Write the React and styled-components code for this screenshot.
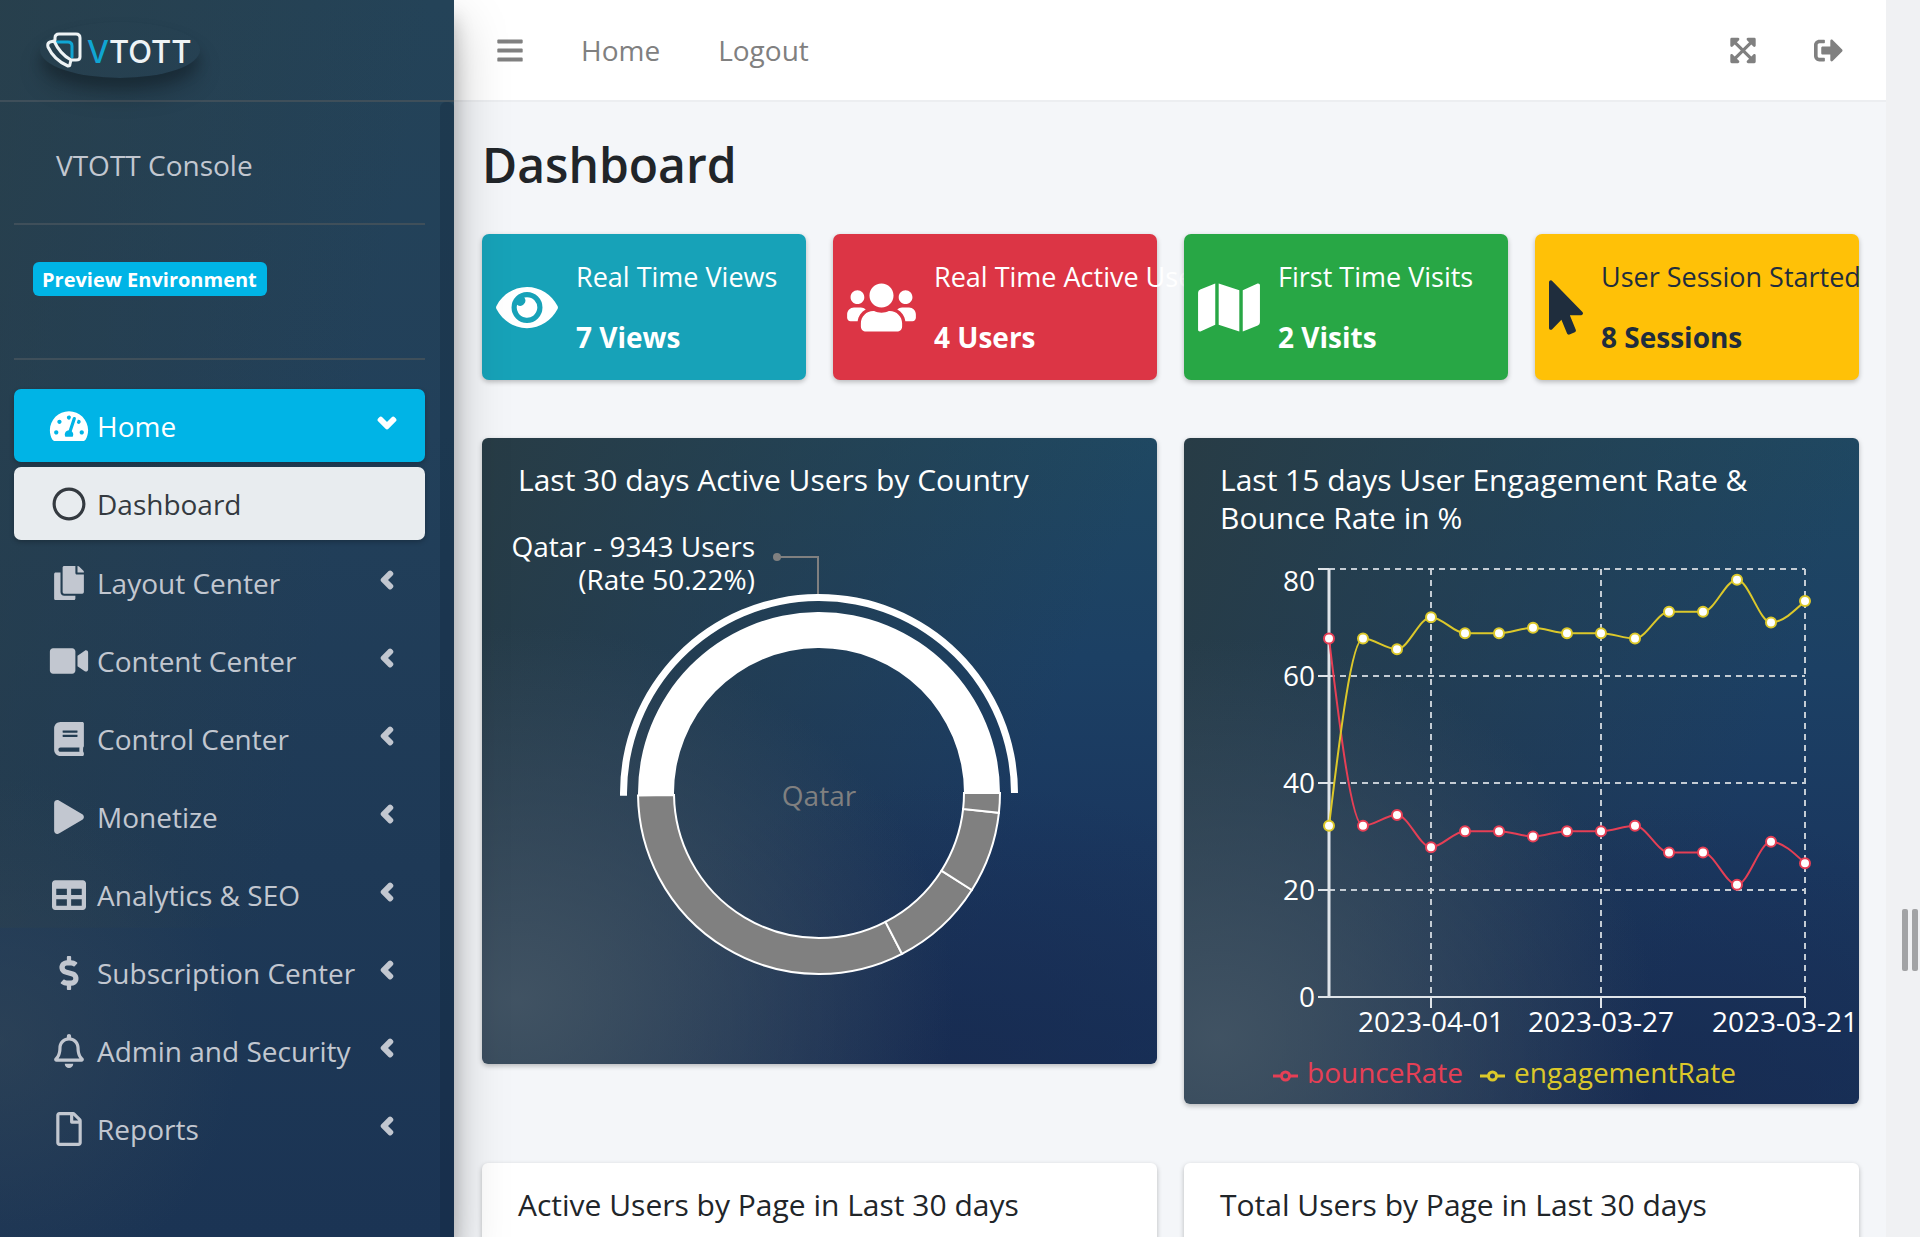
import React from "react";
import styled, { createGlobalStyle, css } from "styled-components";
import {
  FaAngleDown, FaAngleLeft, FaBars, FaBook, FaCopy, FaDollarSign, FaExpandArrowsAlt, FaEye, FaMap,
  FaMousePointer, FaPlay, FaRegBell, FaRegCircle, FaRegFile, FaSignOutAlt, FaTable, FaTachometerAlt,
  FaUsers, FaVideo,
} from "react-icons/fa";

const GlobalStyle = createGlobalStyle`
  *, *::before, *::after { box-sizing: border-box; }
  body {
    margin: 0;
    font-family: "Open Sans", "Noto Sans", sans-serif;
    font-size: 28px;
    line-height: 42px;
    color: #212529;
    background: #f4f6f9;
  }
  button { font: inherit; border: 0; background: none; padding: 0; cursor: pointer; }
  a { color: inherit; text-decoration: none; }
  ul { list-style: none; margin: 0; padding: 0; }
  h1, h2, p { margin: 0; }
  svg { flex: none; display: block; }
`;

const Shell = styled.div`
  display: flex;
  height: 100vh;
  overflow: hidden;
`;

/* ---------- sidebar ---------- */

const Sidebar = styled.aside`
  position: relative;
  z-index: 2;
  flex: none;
  width: 454px;
  display: flex;
  flex-direction: column;
  color: #c2c7d0;
  background:
    radial-gradient(ellipse 240px 260px at 0% 84%, rgba(56, 74, 88, 0.5), rgba(56, 74, 88, 0) 100%),
    linear-gradient(100deg, rgba(41, 62, 72, 0.7), rgba(41, 62, 72, 0) 70%) 0 0 / 100% 75% no-repeat,
    linear-gradient(180deg, #244358 0%, #22405a 35%, #1e3956 70%, #1b3454 100%);
  box-shadow: 0 25px 50px rgba(0, 0, 0, 0.25), 0 18px 18px rgba(0, 0, 0, 0.22);
`;

const Brand = styled.a`
  flex: none;
  height: 102px;
  padding: 22px 40px;
  border-bottom: 2px solid #3f4f5a;
`;

const BrandBadge = styled.span`
  display: flex;
  align-items: center;
  gap: 5px;
  width: 160px;
  height: 56px;
  padding-left: 6px;
  border-radius: 50%;
  box-shadow: 0 18px 24px rgba(0, 0, 0, 0.19), 0 10px 12px rgba(0, 0, 0, 0.18);
`;

const BrandName = styled.span`
  padding-top: 4px;
  font-family: Inter, sans-serif;
  font-size: 31px;
  font-weight: 500;
  line-height: 36px;
  color: #eef3f5;
  & > span { color: #10a5d3; }
`;

const SidebarBody = styled.div`
  flex: 1;
  display: flex;
  min-height: 0;
`;

const SidebarContent = styled.div`
  flex: 1;
  padding: 0 15px 0 14px;
`;

const ScrollTrack = styled.div`
  width: 14px;
  border-radius: 6px 6px 0 0;
  background: rgba(10, 30, 50, 0.25);
`;

const ConsoleTitle = styled.p`
  height: 123px;
  padding: 42px 42px 0;
  border-bottom: 2px solid #3f4f5a;
`;

const Environment = styled.div`
  height: 135px;
  padding: 37px 19px 0;
  border-bottom: 2px solid #3f4f5a;
`;

const EnvBadge = styled.span`
  display: inline-block;
  padding: 2px 10px 0 9px;
  border-radius: 6px;
  background: #00b4e6;
  color: #fff;
  font-size: 20px;
  font-weight: 700;
  line-height: 32px;
  vertical-align: top;
`;

const Nav = styled.nav`
  padding-top: 29px;
`;

const NavList = styled.ul`
  display: flex;
  flex-direction: column;
  gap: 5px;
`;

const navItem = css`
  display: flex;
  align-items: center;
  gap: 8px;
  width: 100%;
  height: 73px;
  padding: 0 28px 0 35px;
  border-radius: 7px;
  text-align: left;
  white-space: nowrap;
  color: #c2c7d0;
`;

const NavButton = styled.button`
  ${navItem}
  ${({ $open }) => $open && css`
    color: #fff;
    background: #00b4e6;
    box-shadow: 0 2px 5px rgba(0, 0, 0, 0.24);
  `}
`;

const SubLink = styled.a`
  ${navItem}
  color: #343a40;
  background: #e8ecef;
  box-shadow: 0 2px 5px rgba(0, 0, 0, 0.24);
`;

const SubList = styled.ul`
  padding: 5px 0 1px;
`;

const NavIcon = styled.span`
  display: flex;
  svg { width: 40px; height: 34px; }
`;

const Caret = styled.span`
  display: flex;
  margin-left: auto;
  padding-bottom: 6px;
  svg {
    width: 20px;
    height: 28px;
    stroke: currentColor;
    stroke-width: 28px;
  }
`;

/* ---------- main column ---------- */

const Main = styled.div`
  flex: 1;
  min-width: 0;
  display: flex;
  flex-direction: column;
`;

const Topbar = styled.header`
  flex: none;
  display: flex;
  align-items: center;
  height: 102px;
  padding: 0 14px;
  background: #fff;
  border-bottom: 2px solid #eceef1;
  color: #808080;
`;

const TopButton = styled.button`
  display: flex;
  padding: 13px 29px 12px;
  color: inherit;
  svg { width: ${({ $wide }) => ($wide ? 29 : 26)}px; height: 29px; }
`;

const TopLink = styled.a`
  padding: 0 29px;
`;

const TopActions = styled.div`
  display: flex;
  margin-left: auto;
`;

const Content = styled.main`
  flex: 1;
  min-height: 0;
  overflow-y: auto;
  scrollbar-width: none;
  padding: 32px 27px 0 28px;
`;

const PageTitle = styled.h1`
  font-size: 48px;
  font-weight: 600;
  line-height: 62px;
  margin-bottom: 38px;
`;

const StatGrid = styled.div`
  display: grid;
  grid-template-columns: repeat(4, minmax(0, 1fr));
  gap: 27px;
  margin-bottom: 58px;
`;

const StatCard = styled.section`
  position: relative;
  display: flex;
  align-items: center;
  gap: 18px;
  height: 146px;
  padding: 0 14px;
  border-radius: 7px;
  white-space: nowrap;
  color: ${({ $ink }) => $ink};
  background: ${({ $fill }) => $fill};
  box-shadow: 0 2px 5px rgba(0, 0, 0, 0.25);
  & > svg { width: ${({ $iconWidth }) => $iconWidth}px; height: 55px; }
`;

const StatText = styled.div`
  display: flex;
  flex-direction: column;
  gap: 18px;
`;

const StatLabel = styled.span`
  font-size: 27px;
`;

const StatValue = styled.strong`
  font-weight: 700;
`;

const PanelGrid = styled.div`
  display: grid;
  grid-template-columns: repeat(2, minmax(0, 1fr));
  align-items: start;
  gap: 59px 27px;
`;

const Panel = styled.section`
  border-radius: 6px;
  overflow: hidden;
  padding-top: 23px;
  box-shadow: 0 2px 5px rgba(0, 0, 0, 0.25);
  ${({ $dark }) => $dark ? css`
    color: #fff;
    background:
      radial-gradient(ellipse 65% 60% at 5% 90%, rgba(66, 84, 100, 0.95), rgba(66, 84, 100, 0) 100%),
      radial-gradient(ellipse 60% 45% at 70% 100%, rgba(24, 43, 80, 0.8), rgba(24, 43, 80, 0) 100%),
      linear-gradient(110deg, rgba(40, 59, 68, 0.95), rgba(40, 59, 68, 0) 75%),
      linear-gradient(180deg, #1f4862 0%, #1c4064 35%, #1a375f 65%, #173059 100%);
  ` : css`
    min-height: 500px;
    background: #fff;
  `}
`;

const PanelTitle = styled.h2`
  padding: 0 36px;
  font-size: 30px;
  font-weight: 400;
  line-height: 38px;
`;

const Chart = styled.svg`
  width: 100%;
  height: auto;
  font-size: 28px;
`;

const Legend = styled.ul`
  display: flex;
  justify-content: center;
  gap: 17px;
  padding: 6px 34px 11px 0;
`;

const LegendItem = styled.li`
  display: flex;
  align-items: center;
  gap: 9px;
  color: ${({ $color }) => $color};
  svg { margin-top: 7px; }
`;

const ResizeRail = styled.div`
  flex: none;
  display: flex;
  align-items: flex-end;
  justify-content: flex-end;
  gap: 4px;
  width: 34px;
  padding: 0 2px 266px 0;
  background: #f0f1f3;
`;

const GripBar = styled.span`
  width: 6px;
  height: 62px;
  border-radius: 2px;
  background: #a2a3a5;
`;

/* ---------- data ---------- */

const sections = [
  ["Layout Center", FaCopy],
  ["Content Center", FaVideo],
  ["Control Center", FaBook],
  ["Monetize", FaPlay],
  ["Analytics & SEO", FaTable],
  ["Subscription Center", FaDollarSign],
  ["Admin and Security", FaRegBell],
  ["Reports", FaRegFile],
];

const stats = [
  { label: "Real Time Views", value: "7 Views", icon: FaEye, iconWidth: 62, fill: "#17a2b8", ink: "#fff" },
  { label: "Real Time Active Users", value: "4 Users", icon: FaUsers, iconWidth: 69, fill: "#dc3545", ink: "#fff" },
  { label: "First Time Visits", value: "2 Visits", icon: FaMap, iconWidth: 62, fill: "#28a745", ink: "#fff" },
  { label: "User Session Started", value: "8 Sessions", icon: FaMousePointer, iconWidth: 34, fill: "#ffc107", ink: "#1f2d3d" },
];

const bounceRate = [67, 32, 34, 28, 31, 31, 30, 31, 31, 32, 27, 27, 21, 29, 25];
const engagementRate = [32, 67, 65, 71, 68, 68, 69, 68, 68, 67, 72, 72, 78, 70, 74];
const RED = "#e63f55";
const YELLOW = "#dcc82a";

/* ---------- charts ---------- */

const CX = 337;
const CY = 294;

const polar = (r, deg) => {
  const a = (deg * Math.PI) / 180;
  return [CX + r * Math.cos(a), CY - r * Math.sin(a)];
};

function sector(inner, outer, from, to) {
  const large = to - from > 180 ? 1 : 0;
  const [x1, y1] = polar(outer, from);
  const [x2, y2] = polar(outer, to);
  const [x3, y3] = polar(inner, to);
  const [x4, y4] = polar(inner, from);
  return `M${x1},${y1}A${outer},${outer} 0 ${large} 0 ${x2},${y2}L${x3},${y3}A${inner},${inner} 0 ${large} 1 ${x4},${y4}Z`;
}

const otherSlices = [[180.8, 297.3], [297.3, 327.6], [327.6, 353.7], [353.7, 360]];

function CountryChart() {
  return (
    <Chart viewBox="0 0 675 565" role="img" aria-label="Active users by country">
      {otherSlices.map(([from, to]) => (
        <path key={from} d={sector(145, 181, from, to)} fill="#808080" stroke="#fff" strokeWidth="2" />
      ))}
      <path d={sector(145, 181, 0, 180.8)} fill="#fff" />
      <path d={sector(192, 199, 0, 180.8)} fill="#fff" />
      <path d="M336 95V58H295" fill="none" stroke="#808080" strokeWidth="2" />
      <circle cx="295" cy="58" r="4" fill="#808080" />
      <text x="273" y="58" textAnchor="end" fill="#fff">Qatar - 9343 Users</text>
      <text x="273" y="91" textAnchor="end" fill="#fff">(Rate 50.22%)</text>
      <text x={CX} y="307" textAnchor="middle" fill="#808080">Qatar</text>
    </Chart>
  );
}

const px = (i) => 145 + i * 34;
const py = (v) => 460 - v * 5.35;

/* Monotone cubic through evenly spaced samples. */
function monotone(values) {
  const h = 34;
  const y = values.map(py);
  const slope = y.slice(1).map((v, i) => (v - y[i]) / h);
  const t = y.map((_, i) => {
    if (i === 0 || i === y.length - 1) return 0;
    const a = slope[i - 1];
    const b = slope[i];
    if (a * b <= 0) return 0;
    return 2 * Math.sign(a) * Math.min(Math.abs(a), Math.abs(b), Math.abs(a + b) / 4);
  });
  const n = y.length - 1;
  t[0] = (3 * slope[0] - t[1]) / 2;
  t[n] = (3 * slope[n - 1] - t[n - 1]) / 2;
  let d = `M${px(0)},${y[0]}`;
  for (let i = 0; i < n; i += 1) {
    d += `C${px(i) + h / 3},${y[i] + (t[i] * h) / 3} ${px(i + 1) - h / 3},${y[i + 1] - (t[i + 1] * h) / 3} ${px(i + 1)},${y[i + 1]}`;
  }
  return d;
}

function Series({ values, color }) {
  return (
    <g stroke={color} strokeWidth="2">
      <path d={monotone(values)} fill="none" />
      {values.map((v, i) => <circle key={i} cx={px(i)} cy={py(v)} r="5" fill="#fff" />)}
    </g>
  );
}

const yTicks = [[80, 54], [60, 149], [40, 256], [20, 363], [0, 470]];
const xTicks = [[3, 247, "2023-04-01"], [8, 417, "2023-03-27"], [14, 601, "2023-03-21"]];

function RateChart() {
  return (
    <Chart viewBox="0 0 675 508" role="img" aria-label="Engagement rate and bounce rate">
      <g stroke="#c4ccd4" strokeWidth="2" strokeDasharray="6 5">
        {[80, 60, 40, 20].map((v) => <line key={v} x1="145" x2="621" y1={py(v)} y2={py(v)} />)}
        {xTicks.map(([i]) => <line key={i} x1={px(i)} x2={px(i)} y1="32" y2="460" />)}
      </g>
      <g stroke="#dfe4e9" strokeWidth="2">
        <line x1="145" x2="621" y1="460" y2="460" />
        <line x1="145" x2="145" y1="32" y2="460" strokeWidth="3" />
        {yTicks.map(([v]) => <line key={v} x1="134" x2="145" y1={py(v)} y2={py(v)} />)}
        {xTicks.map(([i]) => <line key={i} x1={px(i)} x2={px(i)} y1="460" y2="471" />)}
      </g>
      <g fill="#fff">
        {yTicks.map(([v, y]) => <text key={v} x="131" y={y} textAnchor="end">{v}</text>)}
        {xTicks.map(([i, x, label]) => <text key={i} x={x} y="495" textAnchor="middle">{label}</text>)}
      </g>
      <Series values={bounceRate} color={RED} />
      <Series values={engagementRate} color={YELLOW} />
    </Chart>
  );
}

function LegendMark() {
  return (
    <svg width="25" height="14" viewBox="0 0 25 14" fill="none" stroke="currentColor" strokeWidth="3" aria-hidden="true">
      <path d="M0 7H8M17 7H25" />
      <circle cx="12.5" cy="7" r="4" />
    </svg>
  );
}

function LogoMark() {
  return (
    <svg width="36" height="36" viewBox="0 0 36 36" fill="none" strokeLinejoin="round" strokeLinecap="round" aria-hidden="true">
      <path d="M11 10H22Q26 10 26 14V25" stroke="#10a5d3" strokeWidth="3" />
      <path d="M9 8V6Q9 2 13 2H30Q34 2 34 6V25Q34 28 30 28H26" stroke="#eef3f5" strokeWidth="3" />
      <path d="M8 9L4 10Q1 11 2 15Q8 28 22 34Q24 34 24 32L25 28Q14 22 8 9Z" stroke="#eef3f5" strokeWidth="3" />
    </svg>
  );
}

/* ---------- page ---------- */

export default function App() {
  return (
    <>
      <GlobalStyle />
      <Shell>
        <Sidebar>
          <Brand href="#" aria-label="VTOTT">
            <BrandBadge>
              <LogoMark />
              <BrandName><span>V</span>TOTT</BrandName>
            </BrandBadge>
          </Brand>
          <SidebarBody>
            <SidebarContent>
              <ConsoleTitle>VTOTT Console</ConsoleTitle>
              <Environment><EnvBadge>Preview Environment</EnvBadge></Environment>
              <Nav>
                <NavList>
                  <li>
                    <NavButton type="button" $open aria-expanded="true">
                      <NavIcon><FaTachometerAlt /></NavIcon>
                      Home
                      <Caret><FaAngleDown /></Caret>
                    </NavButton>
                    <SubList>
                      <li>
                        <SubLink href="#" aria-current="page">
                          <NavIcon><FaRegCircle /></NavIcon>
                          Dashboard
                        </SubLink>
                      </li>
                    </SubList>
                  </li>
                  {sections.map(([label, Icon]) => (
                    <li key={label}>
                      <NavButton type="button" aria-expanded="false">
                        <NavIcon><Icon /></NavIcon>
                        {label}
                        <Caret><FaAngleLeft /></Caret>
                      </NavButton>
                    </li>
                  ))}
                </NavList>
              </Nav>
            </SidebarContent>
            <ScrollTrack />
          </SidebarBody>
        </Sidebar>

        <Main>
          <Topbar>
            <TopButton type="button" aria-label="Toggle menu"><FaBars /></TopButton>
            <TopLink href="#">Home</TopLink>
            <TopLink href="#">Logout</TopLink>
            <TopActions>
              <TopButton type="button" aria-label="Full screen"><FaExpandArrowsAlt /></TopButton>
              <TopButton type="button" $wide aria-label="Sign out"><FaSignOutAlt /></TopButton>
            </TopActions>
          </Topbar>
          <Content>
            <PageTitle>Dashboard</PageTitle>
            <StatGrid>
              {stats.map(({ label, value, icon: Icon, iconWidth, fill, ink }) => (
                <StatCard key={label} $fill={fill} $ink={ink} $iconWidth={iconWidth}>
                  <Icon />
                  <StatText>
                    <StatLabel>{label}</StatLabel>
                    <StatValue>{value}</StatValue>
                  </StatText>
                </StatCard>
              ))}
            </StatGrid>
            <PanelGrid>
              <Panel $dark>
                <PanelTitle>Last 30 days Active Users by Country</PanelTitle>
                <CountryChart />
              </Panel>
              <Panel $dark>
                <PanelTitle>Last 15 days User Engagement Rate &amp; Bounce Rate in %</PanelTitle>
                <RateChart />
                <Legend>
                  <LegendItem $color={RED}><LegendMark />bounceRate</LegendItem>
                  <LegendItem $color={YELLOW}><LegendMark />engagementRate</LegendItem>
                </Legend>
              </Panel>
              <Panel><PanelTitle>Active Users by Page in Last 30 days</PanelTitle></Panel>
              <Panel><PanelTitle>Total Users by Page in Last 30 days</PanelTitle></Panel>
            </PanelGrid>
          </Content>
        </Main>

        <ResizeRail role="separator" aria-orientation="vertical">
          <GripBar />
          <GripBar />
        </ResizeRail>
      </Shell>
    </>
  );
}
